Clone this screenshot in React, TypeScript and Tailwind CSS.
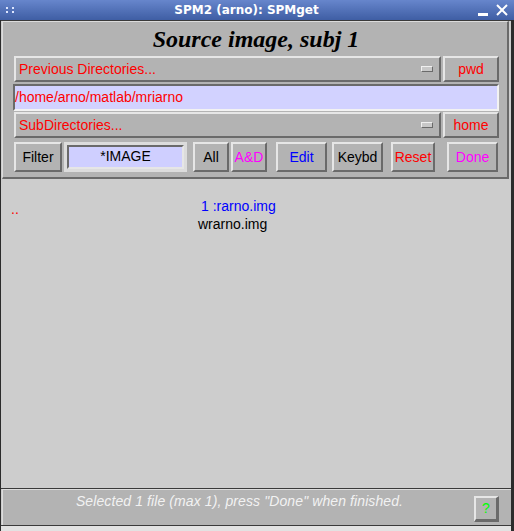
import React from "react";

const raised =
  "border border-t-[#e6e6e6] border-l-[#e6e6e6] border-b-[#6a6a6a] border-r-[#6a6a6a] border-2 bg-[#b3b3b3]";
const sunken =
  "border-2 border-t-[#6a6a6a] border-l-[#6a6a6a] border-b-[#e6e6e6] border-r-[#e6e6e6] bg-[#cfcfff]";

function Btn({ label, color, w, ml }: { label: string; color: string; w: string; ml: string }) {
  return (
    <div className={`${raised} ${w} ${ml} h-[30px] flex items-center justify-center text-[14px] ${color}`}>
      {label}
    </div>
  );
}

function Popup({ label }: { label: string }) {
  return (
    <div className={`${raised} flex-1 h-[26px] flex items-center pl-[3px] pr-[6px] text-[14px] text-[#ff0000]`}>
      <span className="flex-1">{label}</span>
      <span className="w-[12px] h-[6px] border border-t-[#f0f0f0] border-l-[#f0f0f0] border-b-[#6a6a6a] border-r-[#6a6a6a] bg-[#c8c8c8]" />
    </div>
  );
}

export default function App() {
  return (
    <div
      className="w-[514px] h-[531px] flex flex-col bg-[#2b2b2b] overflow-hidden"
      style={{ fontFamily: '"Liberation Sans", Arial, sans-serif' }}
    >
      {/* barre de titre */}
      <div className="h-[20px] flex items-center bg-gradient-to-b from-[#6786cc] to-[#3f5ea4] text-white px-[6px]">
        <div className="grid grid-cols-2 gap-x-[3px] gap-y-[2px] w-[9px]">
          <span className="w-[2px] h-[2px] bg-[#dde6ff]" />
          <span className="w-[2px] h-[2px] bg-[#dde6ff]" />
          <span className="w-[2px] h-[2px] bg-[#dde6ff]" />
          <span className="w-[2px] h-[2px] bg-[#dde6ff]" />
        </div>
        <div
          className="flex-1 text-center text-[12px] font-bold"
          style={{ fontFamily: '"DejaVu Sans", sans-serif' }}
        >
          SPM2 (arno): SPMget
        </div>
        <div className="flex items-center gap-[8px]">
          <span className="w-[10px] h-[3px] bg-white mt-[8px]" />
          <svg width="12" height="12" viewBox="0 0 12 12">
            <line x1="1" y1="1" x2="11" y2="11" stroke="white" strokeWidth="2" />
            <line x1="11" y1="1" x2="1" y2="11" stroke="white" strokeWidth="2" />
          </svg>
        </div>
      </div>

      {/* corps */}
      <div className="flex-1 flex flex-col ml-[1px] mr-[3px] bg-[#cdcdcd]">
        <div className="h-[1px] bg-[#3a3a3a]" />
        {/* panneau du haut */}
        <div className="ml-[1px] mr-[2px] border-2 border-t-[#dcdcdc] border-l-[#dcdcdc] border-r-[#6a6a6a] border-b-[#6a6a6a] border-t-[1px] border-l-[1px] bg-[#b3b3b3] pl-[10px] pr-[8px] pb-[5px]">
          <div
            className="h-[34px] flex items-center justify-center text-[24px] font-bold italic text-black"
            style={{ fontFamily: '"Liberation Serif", "Times New Roman", serif' }}
          >
            Source image, subj 1
          </div>
          <div className="flex gap-[2px] ml-[1px]">
            <Popup label="Previous Directories..." />
            <Btn label="pwd" color="text-[#ff0000]" w="w-[56px]" ml="ml-0 !h-[26px]" />
          </div>
          <div className={`${sunken} mt-[2px] h-[27px] flex items-center text-[14px] text-[#ff0000] bg-[#d2d2ff] border-b-[#f2f2f2] border-r-[#f2f2f2]`}>
            /home/arno/matlab/mriarno
          </div>
          <div className="flex gap-[2px] ml-[1px] mt-[1px]">
            <Popup label="SubDirectories..." />
            <Btn label="home" color="text-[#ff0000]" w="w-[56px]" ml="ml-0 !h-[26px]" />
          </div>
          <div className="flex mt-[4px] ml-[1px]">
            <Btn label="Filter" color="text-black" w="w-[48px]" ml="ml-0" />
            <div className="ml-[2px] w-[123px] h-[30px] border-[3px] border-[#dcdcdc] bg-[#b3b3b3]">
              <div className={`${sunken} h-full flex justify-center text-[14px] text-black leading-[18px]`}>
                *IMAGE
              </div>
            </div>
            <Btn label="All" color="text-black" w="w-[36px]" ml="ml-[6px]" />
            <Btn label="A&D" color="text-[#ff00ff]" w="w-[36px]" ml="ml-[2px]" />
            <Btn label="Edit" color="text-[#0000ff]" w="w-[51px]" ml="ml-[9px]" />
            <Btn label="Keybd" color="text-black" w="w-[51px]" ml="ml-[5px]" />
            <Btn label="Reset" color="text-[#ff0000]" w="w-[44px]" ml="ml-[8px]" />
            <Btn label="Done" color="text-[#ff00ff]" w="w-[51px]" ml="ml-[12px]" />
          </div>
        </div>

        {/* liste des fichiers */}
        <div className="flex-1 flex text-[14px] pt-[22px]">
          <div className="pl-[10px] w-[197px] text-[#ff0000] leading-[16px]">..</div>
          <div className="flex flex-col leading-[18px] -mt-[4px]">
            <span className="pl-[3px] text-[#0000ff]">1 :rarno.img</span>
            <span className="text-black">wrarno.img</span>
          </div>
        </div>

        {/* barre d'état */}
        <div className="h-[1px] bg-[#3a3a3a]" />
        <div className="h-[36px] ml-[1px] border-t border-l border-[#dcdcdc] bg-[#b3b3b3] flex items-center">
          <div className="flex-1 text-center italic text-[14px] text-[#f2f2f2] pl-[2px] -mt-[13px] tracking-[0.1px]">
            Selected 1 file (max 1), press "Done" when finished.
          </div>
          <div className="w-[25px] h-[26px] mr-[12px] mt-[3px] border-2 border-t-[#e6e6e6] border-l-[#e6e6e6] border-b-[#6a6a6a] border-r-[#6a6a6a] border-b-[3px] border-r-[3px] bg-[#b3b3b3] flex items-center justify-center text-[14px] text-[#00ff00]">
            ?
          </div>
        </div>
        <div className="h-[1px] bg-[#3a3a3a]" />
        <div className="h-[5px] bg-[#e2e2e2]" />
      </div>
    </div>
  );
}
